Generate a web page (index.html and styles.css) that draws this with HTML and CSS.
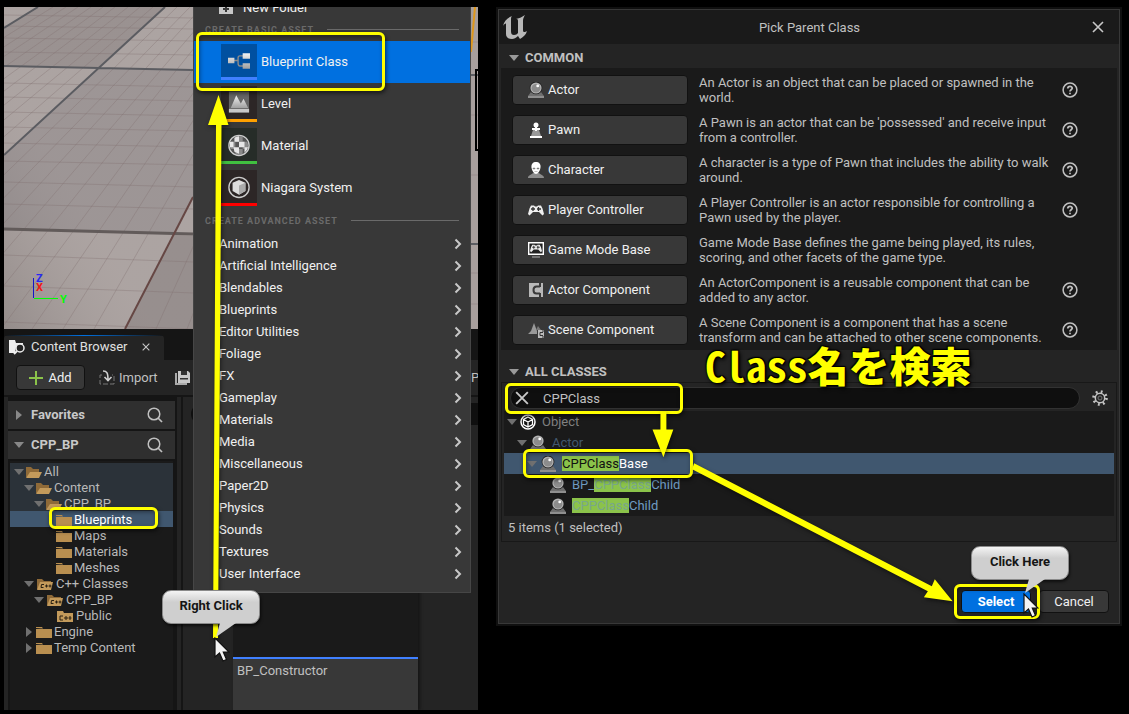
FILE: index.html
```html
<!DOCTYPE html>
<html lang="en">
<head>
<meta charset="utf-8">
<title>Pick Parent Class</title>
<link rel="stylesheet" href="styles.css">
</head>
<body>
<svg class="defs" aria-hidden="true">
  <symbol id="down" viewBox="0 0 10 10"><path d="M0 2h10L5 8z" fill="currentColor"/></symbol>
  <symbol id="right" viewBox="0 0 10 10"><path d="M2 0v10l6-5z" fill="currentColor"/></symbol>
  <symbol id="chev" viewBox="0 0 8 12"><path d="M1.500 1.500L6 6l-4.500 4.500" fill="none" stroke="#c8c8c8" stroke-width="2"/></symbol>
  <symbol id="mag" viewBox="0 0 16 16"><circle cx="7" cy="7" r="5.800" fill="none" stroke="#c0c0c0" stroke-width="1.500"/><path d="M11 11l4 4" stroke="#c0c0c0" stroke-width="1.700"/></symbol>
  <symbol id="folder" viewBox="0 0 16 16"><path d="M0 4V3h6l1 1.500z" fill="#b98f50"/><path d="M0 5h16v9H0z" fill="#b98f50"/></symbol>
  <symbol id="open" viewBox="0 0 16 16"><path d="M0 13V3h5l2 2h6v3H5l-4 5z" fill="#8f6a38"/><path d="M4 8h12l-3 6H0z" fill="#c39a5b"/></symbol>
  <symbol id="cppopen" viewBox="0 0 16 16"><path d="M0 13V3h5l2 2h7v2H4l-3 6z" fill="#8f6a38"/><path d="M3 6h13l-2 8H0z" fill="#c39a5b"/><path d="M7 8.500H4.500L4 11.500h2.500M9.500 8.500v3M8 10h3M13 8.500v3M11.500 10h3" fill="none" stroke="#2a2012"/></symbol>
  <symbol id="cpp" viewBox="0 0 16 16"><path d="M0 3h6l1 2h9v9H0z" fill="#c39a5b"/><path d="M6 8H3v4h3M9 8v4M7 10h4M13 8v4M11.500 10h3" fill="none" stroke="#2a2012"/></symbol>
  <symbol id="close" viewBox="0 0 12 12"><path d="M1 1l10 10M11 1L1 11" stroke="#c8c8c8" stroke-width="1.600"/></symbol>
  <symbol id="help" viewBox="0 0 16 16"><circle cx="8" cy="8" r="6.900" fill="none" stroke="#c0c0c0" stroke-width="1.500"/><path d="M5.800 6.500C5.800 3.600 10.300 3.700 10.200 6.300 10.100 7.800 8 7.800 8 9.600M8 10.700v1.600" fill="none" stroke="#c0c0c0" stroke-width="1.800"/></symbol>
  <symbol id="actor" viewBox="0 0 16 16"><path d="M3 10h10l3 4v2H0v-2z" fill="#6f6f6f"/><path d="M0 14h16v2H0z" fill="#8f8f8f"/><circle cx="8" cy="6" r="6.300" fill="#1d1d1d"/><circle cx="8" cy="6" r="5.600" fill="#b4b4b4"/><circle cx="8" cy="6.300" r="4.300" fill="#8c8c8c"/><circle cx="9.700" cy="3.900" r="1.400" fill="#fff"/></symbol>
  <symbol id="pad" viewBox="0 0 16 16"><path d="M3 3.500h3l1 1h2l1-1h3l1.500 3L16 12l-1.500 1.500L11 10H5l-3.500 3.500L0 12l1.500-5.500z" fill="#eee"/><path d="M3 7h4M5 5v4M10.500 5v4M9 7h4" stroke="#333" stroke-width="1.300"/></symbol>
  <symbol id="cursor" viewBox="0 0 16 25"><path d="M1 1v19l4.500-4L9 24l3.500-1.500L9.300 15H15z" fill="#f4f4f4" stroke="#111" stroke-width="1.200"/></symbol>
  <linearGradient id="metal" x1="0" y1="0" x2="0" y2="1"><stop offset="0" stop-color="#f2f2f2"/><stop offset="1" stop-color="#a0a0a0"/></linearGradient>
</svg>

<main class="board">
<section class="editor">
  <svg class="viewport" viewBox="4 7 474 322" preserveAspectRatio="xMinYMin slice" role="img" aria-label="Viewport">
    <linearGradient id="shade" x1="0" y1="1" x2="1" y2="0"><stop offset="0" stop-color="#000" stop-opacity=".12"/><stop offset=".4" stop-color="#fff" stop-opacity=".05"/></linearGradient>
    <path d="M4 7h474v322H4z" fill="#a89f9d"/>
    <path d="M4 28L38 7h127L98 68 4 66z" fill="#958c8b"/>
    <path d="M4 155L98 68l95 2v127l-17 36-172-4z" fill="#989090"/>
    <path d="M173 235l20 1v93h-68z" fill="#928988"/>
    <path d="M4 7h190v322H4z" fill="url(#shade)"/>
    <path d="M53 7L-466 329M66 7L-435 329M78 7L-404 329M91 7L-373 329M103 7L-342 329M115 7L-310 329M128 7L-279 329M140 7L-248 329M153 7L-217 329M177 7L-155 329M190 7L-124 329M202 7L-93 329M215 7L-62 329M227 7L-31 329M239 7L1 329M252 7L32 329M264 7L63 329M277 7L94 329M301 7L156 329M314 7L187 329M4 15l190 3M4 26l190 3M4 38l190 3M4 52l190 3M4 83l190 4M4 97l190 4M4 112l190 4M4 127l190 4M4 143l190 4M4 161l190 4M4 182l190 5M4 204l190 5M4 255l190 7M4 286l190 7M4 322l190 7M471 42h7M471 115h7M471 175h7M471 273h7M471 304h7" fill="none" stroke="#80706f" stroke-opacity=".35"/>
    <path d="M4 66l189 4M4 28L38 7M165 7L4 155M471 75h7M471 244h7" stroke="#5b5c61" stroke-width="2" fill="none"/>
    <path d="M4 229l189 5" stroke="#625b5a" stroke-width="3"/>
    <path d="M193 197l-68 132" stroke="#664744" stroke-width="2"/>
    <path d="M475 7l-4 45" stroke="#e0981c" stroke-width="2"/>
    <path d="M479 70h-3v80h3" stroke="#000" stroke-width="2" fill="none"/>
    <path d="M33.500 278v20" stroke="#1515c8"/><path d="M34 298.500h24" stroke="#0f0"/>
    <text x="36" y="282" class="axis axis-z">Z</text><text x="36" y="291" class="axis axis-x">X</text><text x="60" y="303" class="axis axis-y">Y</text>
  </svg>

  <div class="browser">
    <div class="tabs"><div class="tab">
      <svg width="18" height="16" viewBox="0 0 18 16"><path d="M1 1h6l1 3h7v2L8 8l-1 6H1z" fill="#eee"/><circle cx="12" cy="9" r="4" fill="#242424" stroke="#eee" stroke-width="1.500"/><path d="M9 12l-3 3" stroke="#eee" stroke-width="2"/></svg>
      <span>Content Browser</span>
      <button class="plain tab-close" aria-label="Close tab"><svg width="8" height="8"><use href="#close"/></svg></button>
    </div></div>
    <div class="toolbar">
      <button class="btn add"><svg width="14" height="14" viewBox="0 0 14 14"><path d="M7 0v14M0 7h14" stroke="#8bc34a" stroke-width="2"/></svg>Add</button>
      <button class="plain import"><svg width="16" height="16" viewBox="0 0 16 16"><path d="M3 5H1v9h14V5h-2" fill="none" stroke="#777" stroke-dasharray="5 2"/><path d="M4 1c4 0 5 2 5 9M5.500 7L9 10.500 12.500 7" fill="none" stroke="#d0d0d0" stroke-width="1.600"/></svg>Import</button>
      <svg class="save" width="15" height="14" viewBox="0 0 15 14"><path d="M1 2v11h11" fill="none" stroke="#aaa" stroke-width="2"/><path d="M3 0h10l2 2v10H3z" fill="#c8c8c8"/><path d="M6 0h6v4H6zM5 7h8v1.500H5z" fill="#333"/></svg>
      <span class="clipped">P</span>
    </div>
    <div class="panes">
      <aside class="side">
        <div class="side-head"><svg width="10" height="10"><use href="#right"/></svg><b>Favorites</b><svg width="16" height="16"><use href="#mag"/></svg></div>
        <div class="side-head"><svg width="10" height="10"><use href="#down"/></svg><b>CPP_BP</b><svg width="16" height="16"><use href="#mag"/></svg></div>
        <ul class="tree">
          <li class="path d0"><svg width="10" height="10"><use href="#down"/></svg><svg width="16" height="16"><use href="#open"/></svg>All</li>
          <li class="path d1"><svg width="10" height="10"><use href="#down"/></svg><svg width="16" height="16"><use href="#open"/></svg>Content</li>
          <li class="path d2"><svg width="10" height="10"><use href="#down"/></svg><svg width="16" height="16"><use href="#open"/></svg>CPP_BP</li>
          <li class="picked d4"><svg width="16" height="16"><use href="#folder"/></svg>Blueprints<i class="ring ring-tree"></i></li>
          <li class="d4"><svg width="16" height="16"><use href="#folder"/></svg>Maps</li>
          <li class="d4"><svg width="16" height="16"><use href="#folder"/></svg>Materials</li>
          <li class="d4"><svg width="16" height="16"><use href="#folder"/></svg>Meshes</li>
          <li class="d1"><svg width="10" height="10"><use href="#down"/></svg><svg width="18" height="16"><use href="#cppopen"/></svg>C++ Classes</li>
          <li class="d2"><svg width="10" height="10"><use href="#down"/></svg><svg width="18" height="16"><use href="#cppopen"/></svg>CPP_BP</li>
          <li class="d4"><svg width="18" height="16"><use href="#cpp"/></svg>Public</li>
          <li class="d1"><svg width="10" height="10"><use href="#right"/></svg><svg width="16" height="16"><use href="#folder"/></svg>Engine</li>
          <li class="d1"><svg width="10" height="10"><use href="#right"/></svg><svg width="16" height="16"><use href="#folder"/></svg>Temp Content</li>
        </ul>
      </aside>
      <div class="assets">
        <div class="filter"></div>
        <div class="card"><div class="card-name">BP_Constructor</div></div>
      </div>
    </div>
  </div>

  <nav class="menu">
    <button class="entry folder-entry"><svg width="14" height="12" viewBox="0 0 14 12"><path d="M0 0h5l2 2h7v10H0z" fill="#c8c8c8"/><path d="M7 4v6M4 7h6" stroke="#383838" stroke-width="2"/></svg>New Folder</button>
    <div class="group">CREATE BASIC ASSET</div>
    <button class="asset current"><svg class="thumb blue" width="36" height="36" viewBox="0 0 36 36"><path d="M12 18h5M23 13h-4q-2 0-2 2v6q0 3 2 3h4" fill="none" stroke="#8b8b8b" stroke-width="1.500"/><path d="M6 15h7v6H6zM22 10h8v6h-8zM22 21h8v6h-8z" fill="url(#metal)"/></svg>Blueprint Class<i class="ring ring-menu"></i></button>
    <button class="asset"><svg class="thumb orange" width="36" height="36" viewBox="0 0 36 36"><path d="M7 6h22v22H7z" fill="#666"/><path d="M7 25h22v4H7z" fill="#c8c8c8"/><path d="M9 24l6-14 5 9 3-5 5 10z" fill="url(#metal)"/></svg>Level</button>
    <button class="asset"><svg class="thumb green" width="36" height="36" viewBox="0 0 36 36"><circle cx="18" cy="19" r="10" fill="#555"/><path d="M14 9.800a10 10 0 0 1 8 0V15h-8zM8.800 15H14v8H8.800a10 10 0 0 1 0-8zM22 15h5.200a10 10 0 0 1 0 8H22zM14 23h8v5.200a10 10 0 0 1-8 0z" fill="#8a8a8a"/><path d="M18 9a10 10 0 0 0-5 1.500V15h5zM18 15h6v6h-6zM12 21h6v7l-5-2zM24 21h3.800a10 10 0 0 1-3.800 6zM8.200 15H12v6H8z" fill="#e6e6e6"/><circle cx="18" cy="19" r="11" fill="none" stroke="#ccc" stroke-width="1.500"/></svg>Material</button>
    <button class="asset"><svg class="thumb red" width="36" height="36" viewBox="0 0 36 36"><circle cx="18" cy="19" r="11" fill="none" stroke="#ccc" stroke-width="1.500"/><path d="M18 11l7 3v9l-7 4-7-4v-9z" fill="#ddd"/><path d="M18 17l7-3v9l-7 4z" fill="#aaa"/></svg>Niagara System</button>
    <div class="group">CREATE ADVANCED ASSET</div>
    <button class="entry">Animation<svg width="8" height="12"><use href="#chev"/></svg></button>
    <button class="entry">Artificial Intelligence<svg width="8" height="12"><use href="#chev"/></svg></button>
    <button class="entry">Blendables<svg width="8" height="12"><use href="#chev"/></svg></button>
    <button class="entry">Blueprints<svg width="8" height="12"><use href="#chev"/></svg></button>
    <button class="entry">Editor Utilities<svg width="8" height="12"><use href="#chev"/></svg></button>
    <button class="entry">Foliage<svg width="8" height="12"><use href="#chev"/></svg></button>
    <button class="entry">FX<svg width="8" height="12"><use href="#chev"/></svg></button>
    <button class="entry">Gameplay<svg width="8" height="12"><use href="#chev"/></svg></button>
    <button class="entry">Materials<svg width="8" height="12"><use href="#chev"/></svg></button>
    <button class="entry">Media<svg width="8" height="12"><use href="#chev"/></svg></button>
    <button class="entry">Miscellaneous<svg width="8" height="12"><use href="#chev"/></svg></button>
    <button class="entry">Paper2D<svg width="8" height="12"><use href="#chev"/></svg></button>
    <button class="entry">Physics<svg width="8" height="12"><use href="#chev"/></svg></button>
    <button class="entry">Sounds<svg width="8" height="12"><use href="#chev"/></svg></button>
    <button class="entry">Textures<svg width="8" height="12"><use href="#chev"/></svg></button>
    <button class="entry">User Interface<svg width="8" height="12"><use href="#chev"/></svg></button>
  </nav>

  <svg class="arrows" viewBox="4 7 474 703" preserveAspectRatio="xMinYMin meet"><path d="M218.500 95l10 30h-7l-3.500 513h-5l3-513h-8z" fill="#ff0"/></svg>
  <div class="callout callout-right">Right Click<svg class="tail" width="24" height="16" viewBox="0 0 24 16"><path d="M6 0L2 14 22 0z" fill="#cfcfcf"/></svg><svg class="cursor" width="16" height="25"><use href="#cursor"/></svg></div>
</section>

<section class="dialog">
  <header class="title">
    <svg width="24" height="24" viewBox="0 0 24 24"><path d="M0 11C1 6 4 3 9 1 8 2 8 3 8 5v11c0 3 1 4 3 4s3-1 4-2V6c0-2-1-2-2-2 4-1 6-2 9-4-1 2-2 3-2 6v9c0 2 1 3 4 1-1 4-4 6-7 8l-2-3c-2 2-4 3-6 3-4 0-6-2-6-5V9C3 8 1 9 0 11z" fill="#b8b8b8"/></svg>
    <h1>Pick Parent Class</h1>
    <button class="plain" aria-label="Close"><svg width="12" height="12"><use href="#close"/></svg></button>
  </header>
  <h2 class="section"><svg width="10" height="10"><use href="#down"/></svg>COMMON</h2>
  <div class="common">
    <div class="row"><button class="btn"><svg width="16" height="16"><use href="#actor"/></svg>Actor</button><p>An Actor is an object that can be placed or spawned in the world.</p><svg width="16" height="16"><use href="#help"/></svg></div>
    <div class="row"><button class="btn"><svg width="16" height="16" viewBox="0 0 16 16"><path d="M5 8h6l2 6H3z" fill="#999"/><circle cx="8" cy="3" r="2.500" fill="#fff"/><path d="M4 6h8v2H4zM2 14h12v2H2z" fill="#fff"/><path d="M7 5h2v4H7z" fill="#fff"/></svg>Pawn</button><p>A Pawn is an actor that can be 'possessed' and receive input from a controller.</p><svg width="16" height="16"><use href="#help"/></svg></div>
    <div class="row"><button class="btn"><svg width="16" height="16" viewBox="0 0 16 16"><path d="M0 16c0-3 3-3 5-5h6c2 2 5 2 5 5z" fill="#8c8c8c"/><path d="M8 0c3 0 5 2 4.500 5.500C12 9 10 12 8 12S4 9 3.500 5.500C3 2 5 0 8 0z" fill="#fff"/><path d="M5 6h2v1H5zM9 6h2v1H9zM6.500 9.500h3" stroke="#999" fill="#555" stroke-width=".6"/></svg>Character</button><p>A character is a type of Pawn that includes the ability to walk around.</p><svg width="16" height="16"><use href="#help"/></svg></div>
    <div class="row"><button class="btn"><svg width="16" height="16"><use href="#pad"/></svg>Player Controller</button><p>A Player Controller is an actor responsible for controlling a Pawn used by the player.</p><svg width="16" height="16"><use href="#help"/></svg></div>
    <div class="row"><button class="btn"><svg width="16" height="16" viewBox="0 0 16 16"><path d="M.7.700h14.600v11.600H.7z" fill="#222" stroke="#fff" stroke-width="1.400"/><use href="#pad" x="2" y="0" width="12" height="12"/><path d="M4 15h8" stroke="#888" stroke-width="1.500"/></svg>Game Mode Base</button><p>Game Mode Base defines the game being played, its rules, scoring, and other facets of the game type.</p></div>
    <div class="row"><button class="btn"><svg width="16" height="16" viewBox="0 0 16 16"><path d="M1 1h14v14H1z" fill="#b8b8b8"/><path d="M12 1v4M12 11v4M12 4.500H8.500Q5.500 4.500 5.500 8t3 3.500H12" fill="none" stroke="#383838" stroke-width="2"/></svg>Actor Component</button><p>An ActorComponent is a reusable component that can be added to any actor.</p><svg width="16" height="16"><use href="#help"/></svg></div>
    <div class="row"><button class="btn"><svg width="16" height="16" viewBox="0 0 16 16"><path d="M0 12L3 9l3-8 3 8v3z" fill="#999"/><path d="M8 8l2-4 3 4z" fill="#777"/><path d="M10 8h6v8h-6z" fill="#bbb"/><path d="M15 8v2M15 14v2M15 10.500h-3v3h3" fill="none" stroke="#333"/></svg>Scene Component</button><p>A Scene Component is a component that has a scene transform and can be attached to other scene components.</p><svg width="16" height="16"><use href="#help"/></svg></div>
  </div>
  <h2 class="section all"><svg width="10" height="10"><use href="#down"/></svg>ALL CLASSES</h2>
  <div class="classes">
    <div class="search-row">
      <div class="search"><button class="plain" aria-label="Clear search"><svg width="14" height="14"><use href="#close"/></svg></button><input type="text" value="CPPClass" aria-label="Search classes"><i class="ring ring-search"></i></div>
      <button class="plain" aria-label="Settings"><svg width="16" height="16" viewBox="0 0 16 16"><circle cx="8" cy="8" r="6.300" fill="none" stroke="#c4c4c4" stroke-width="3" stroke-dasharray="1.800 3.150"/><circle cx="8" cy="8" r="4.700" fill="#242424" stroke="#c4c4c4" stroke-width="1.500"/><circle cx="8" cy="8" r="2" fill="none" stroke="#777"/></svg></button>
    </div>
    <ul class="results">
      <li class="c0 muted"><svg width="10" height="10"><use href="#down"/></svg><svg width="16" height="16" viewBox="0 0 16 16"><circle cx="8" cy="8" r="7" fill="#111" stroke="#fff" stroke-width="1.500"/><path d="M8 3l4.500 2.500v5L8 13l-4.500-2.500v-5zM3.500 5.500L8 8l4.500-2.500M8 8v5" fill="none" stroke="#fff" stroke-width="1.300"/></svg>Object</li>
      <li class="c1 dim"><svg width="10" height="10"><use href="#down"/></svg><svg width="16" height="16"><use href="#actor"/></svg>Actor</li>
      <li class="c2 chosen"><svg width="10" height="10"><use href="#down"/></svg><svg width="16" height="16"><use href="#actor"/></svg><span><mark>CPPClass</mark>Base</span><i class="ring ring-class"></i></li>
      <li class="c3"><svg width="16" height="16"><use href="#actor"/></svg><span>BP_<mark>CPPClass</mark>Child</span></li>
      <li class="c3"><svg width="16" height="16"><use href="#actor"/></svg><span><mark>CPPClass</mark>Child</span></li>
    </ul>
    <div class="status">5 items (1 selected)</div>
  </div>
  <footer class="actions">
    <button class="btn select">Select<i class="ring ring-select"></i></button>
    <button class="btn cancel">Cancel</button>
    <div class="callout callout-here">Click Here<svg class="tail" width="24" height="16" viewBox="0 0 24 16"><path d="M6 0L2 14 22 0z" fill="#cfcfcf"/></svg><svg class="cursor" width="16" height="25"><use href="#cursor"/></svg></div>
  </footer>
  <svg class="arrows" viewBox="496 7 626 618" preserveAspectRatio="none"><path d="M659 412h6v18h7l-10 28-11-28h8zM693 464l240 124 3-7 18 22-29-4 4-6-238-123z" fill="#ff0"/></svg>
  <div class="caption" lang="ja"><span class="latin">Class</span>名を検索</div>
</section>
</main>
</body>
</html>
```
FILE: styles.css
```css
* { box-sizing: border-box; }
body { margin: 0; background: #000; color: #c0c0c0; font: 13px/16px Roboto, "Noto Sans CJK JP", sans-serif; }
svg { flex: none; display: block; }
button { font: inherit; color: inherit; border: 0; padding: 0; cursor: pointer; }
ul, h1, h2, p { margin: 0; padding: 0; list-style: none; font-size: 13px; }
.defs { position: absolute; width: 0; height: 0; }
.plain { background: none; display: flex; align-items: center; gap: 4px; }
.btn { display: flex; align-items: center; background: #383838; border: 1px solid #111; border-radius: 4px; color: #f0f0f0; }

.board { display: grid; grid-template-columns: minmax(0, 474fr) minmax(0, 626fr); gap: 18px; min-height: 100vh; padding: 7px 7px 4px 4px; }

/* Overlay marks */
.ring { position: absolute; border: 3px solid #ff0; border-radius: 6px; pointer-events: none; box-shadow: 1px 2px 4px rgba(0,0,0,.6), inset 1px 2px 4px rgba(0,0,0,.4); z-index: 2; }
.arrows { position: absolute; inset: 0; width: 100%; height: 100%; pointer-events: none; z-index: 3; filter: drop-shadow(1px 2px 2px rgba(0,0,0,.5)); }
.callout { position: absolute; z-index: 4; width: 98px; height: 34px; border: 1px solid #8a8a8a; border-radius: 9px; background: linear-gradient(#f4f4f4, #cfcfcf 35%); color: #151515; font-weight: 700; text-align: center; line-height: 30px; box-shadow: 1px 2px 3px rgba(0,0,0,.6); }
.tail { position: absolute; top: 32px; left: 51px; }
.cursor { position: absolute; top: 46px; left: 51px; }

/* Editor */
.editor { position: relative; display: flex; flex-direction: column; overflow: hidden; background: #151515; }
.viewport { width: 100%; height: 322px; }
.axis { font: 700 11px Roboto, sans-serif; }
.axis-x { fill: #f01818; }
.axis-y { fill: #0f0; }
.axis-z { fill: #2828f0; }
.browser { flex: 1; display: flex; flex-direction: column; }
.tabs { padding-top: 6px; }
.tab { display: flex; align-items: center; gap: 5px; width: 160px; height: 25px; padding: 0 4px 2px; background: linear-gradient(90deg, #151515, #0070e0 50%, #151515) top / 100% 1px no-repeat #242424; color: #e0e0e0; border-radius: 4px 4px 0 0; }
.tab-close { margin-left: 10px; }
.toolbar { position: relative; display: flex; align-items: center; height: 35px; padding-left: 12px; background: #242424; }
.add { width: 69px; height: 25px; justify-content: center; gap: 5px; border-color: #111; }
.import { margin-left: 14px; }
.save { margin-left: 17px; }
.clipped { margin-left: auto; width: 7px; overflow: hidden; }
.panes { flex: 1; display: flex; border-top: 2px solid #151515; }
.side { flex: none; width: 177px; padding: 4px 2px 0 0; background: #151515; border-left: 4px solid #242424; border-right: 4px solid #242424; display: flex; flex-direction: column; gap: 2px; }
.side-head { display: flex; align-items: center; gap: 7px; height: 28px; padding: 0 12px 0 6px; background: #2f2f2f; color: #c8c8c8; }
.side-head svg:first-child { color: #888; }
.side-head svg:last-child { margin-left: auto; }
.tree { flex: 1; margin: 0 2px; padding-top: 2px; background: #1a1a1a; }
.tree li { position: relative; display: flex; align-items: center; gap: 2px; height: 16px; padding-top: 2px; color: #b8b8b8; white-space: nowrap; }
.tree li svg { color: #707070; }
.tree .path { background: #2b3239; }
.tree .picked { background: #40576f; color: #fff; }
.d0 { padding-left: 4px; }
.d1 { padding-left: 14px; }
.d2 { padding-left: 24px; }
.d4 { padding-left: 46px; }
.ring-tree { inset: -4px 15px -2px 39px; }
.assets { flex: 1; display: flex; flex-direction: column; padding: 6px 0 0 8px; margin-left: 2px; background: #242424; }
.filter { height: 22px; border-radius: 11px 0 0 11px; background: #0f0f0f; }
.card { flex: 1; width: 185px; margin: 8px 0 0 42px; display: flex; flex-direction: column; justify-content: flex-end; background: #1a1a1a; box-shadow: 2px 0 3px #151515; }
.card-name { height: 53px; padding: 4px; border-top: 2px solid #4080ff; background: #383838; }

/* Context menu */
.menu { position: absolute; z-index: 1; left: 189px; top: 0; width: 278px; height: 586px; padding-bottom: 8px; overflow: hidden; display: flex; flex-direction: column; justify-content: flex-end; background: #383838; border: solid #464646; border-width: 0 1px 1px; color: #f0f0f0; }
.entry { flex: none; display: flex; align-items: center; justify-content: space-between; height: 22px; padding: 2px 8px 0 25px; background: none; text-align: left; }
.folder-entry { justify-content: flex-start; gap: 10px; }
.group { flex: none; display: flex; align-items: center; gap: 13px; height: 23px; padding: 0 11px; color: #6a6a6a; font-size: 9px; font-weight: 700; letter-spacing: 1px; }
.group::after { content: ""; flex: 1; height: 1px; background: #6a6a6a; }
.asset { position: relative; flex: none; display: flex; align-items: center; gap: 4px; height: 42px; padding-left: 27px; background: none; text-align: left; }
.current { background: #0070e0; }
.thumb { border-bottom: 3px solid; background: #2c2626; }
.blue { border-color: #4080ff; background: #0050a0; }
.orange { border-color: #ffa000; }
.green { border-color: #40c040; background: #262c28; }
.red { border-color: #f00; }
.ring-menu { inset: -9px 85px -8px 2px; }
.callout-right { left: 158px; top: 583px; }

/* Dialog */
.dialog { position: relative; align-self: start; background: #242424; border: 1px solid #383838; outline: 2px solid #101010; outline-offset: 0; margin: 2px; }
.title { display: grid; grid-template-columns: 30px 1fr 24px; align-items: center; height: 34px; padding: 0 9px 0 4px; background: #1a1a1a; }
.title h1 { padding-top: 1px; font-weight: 400; text-align: center; }
.title .plain { justify-content: center; }
.section { display: flex; align-items: center; gap: 6px; height: 24px; padding: 3px 10px 0; }
.section svg { color: #999; }
.all { height: 32px; padding-top: 11px; }
.common { margin: 0 2px; padding: 2px 11px 0; background: #1a1a1a; }
.row { display: flex; align-items: center; height: 40px; }
.row .btn { flex: none; width: 176px; height: 30px; padding: 0 0 0 15px; gap: 4px; }
.row p { flex: 0 1 353px; margin-left: 11px; margin-right: 10px; line-height: 15px; }
.classes { margin: 0 2px; border: 1px solid #181818; }
.search-row { display: flex; align-items: center; gap: 12px; padding: 4px 8px 2px; }
.search { position: relative; flex: 1; display: flex; align-items: center; height: 22px; padding-left: 4px; border: 1px solid #323232; border-radius: 11px; background: #0f0f0f; }
.search input { flex: 1; height: 20px; padding: 0; margin-left: 14px; border: 0; background: none; color: #c0c0c0; font: inherit; }
.results { margin: 0 2px; background: #1a1a1a; }
.results li { position: relative; display: flex; align-items: center; gap: 3px; height: 21px; color: #6f9cc3; }
.results .muted svg:first-child, .results .dim svg:first-child, .results .chosen svg:first-child { color: #707070; }
.results li svg + svg { margin-right: 3px; }
.results .c3 { gap: 6px; }
.results .muted { color: #808080; }
.results .dim { color: #42586e; }
.results .chosen { background: #40576f; color: #fff; }
.results mark { background: #8bc34a; color: #78a78a; }
.results .chosen mark { color: #111; }
.c0 { padding-left: 3px; }
.c1 { padding-left: 13px; }
.c2 { padding-left: 23px; }
.c3 { padding-left: 46px; }
.status { height: 25px; padding: 4px 6px; }
.actions { position: relative; display: flex; justify-content: flex-end; gap: 8px; padding: 48px 10px 10px; }
.actions .btn { position: relative; justify-content: center; height: 23px; width: 70px; }
.actions .select { background: #0070e0; color: #fff; font-weight: 700; }
.ring-search { left: -6px; top: -5px; width: 178px; height: 31px; }
.ring-class { left: 19px; top: -4px; width: 170px; height: 29px; }
.ring-select { inset: -7px -10px -7px -8px; }
.callout-here { right: 50px; top: 4px; }
.caption { position: absolute; left: 206px; top: 333px; z-index: 5; color: #ff0; font: 900 41px/42px "Noto Sans CJK JP", sans-serif; white-space: nowrap; text-shadow: 1px 1px 1px #000, -1px -1px 1px #000, 1px -1px 1px #000, 2px 2px 4px #000; }
.latin { font-family: "Noto Sans Mono CJK JP", "Noto Sans CJK JP", monospace; }
```
